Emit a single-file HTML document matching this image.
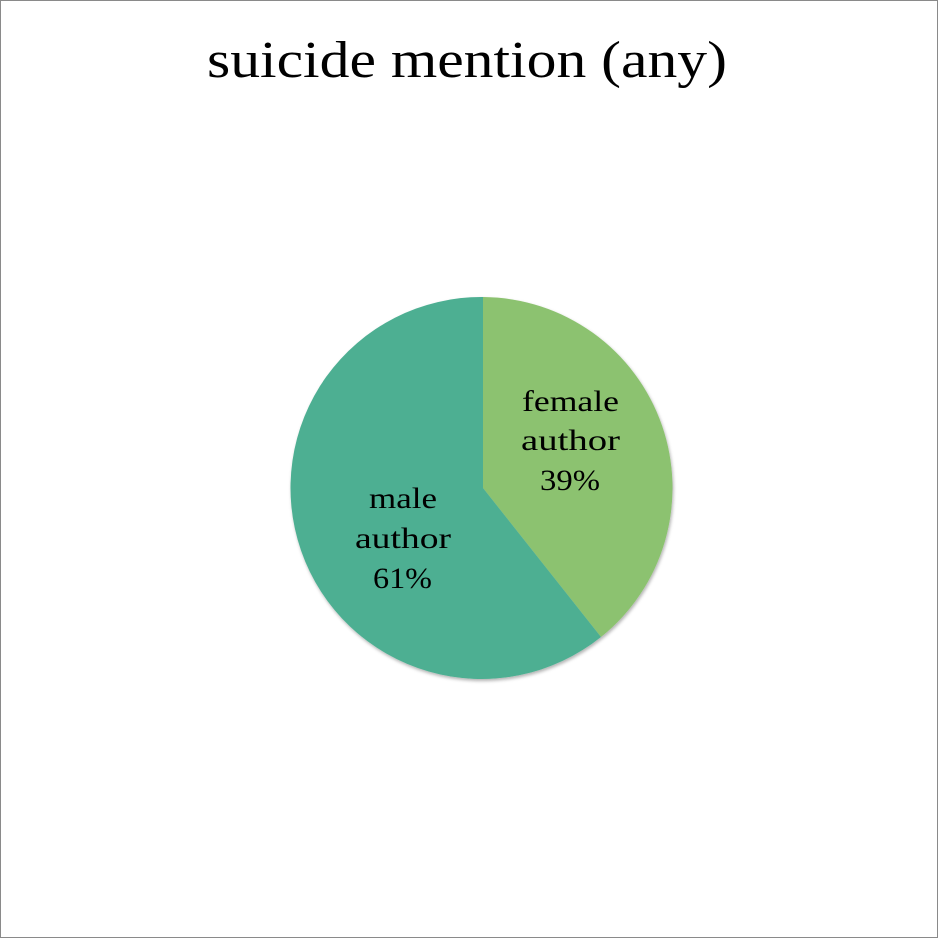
<!DOCTYPE html>
<html><head><style>
html,body{margin:0;padding:0;background:#fff;}
.f{position:absolute;left:0;top:0;width:936px;height:936px;border:1px solid #8a8a8a;}
svg{position:absolute;left:0;top:0}
</style></head><body>
<div class="f"></div>
<svg width="938" height="938" viewBox="0 0 938 938">
<defs><filter id="s" x="-10%" y="-10%" width="120%" height="120%"><feDropShadow dx="1" dy="2" stdDeviation="1.5" flood-opacity="0.3"/></filter></defs>
<g filter="url(#s)">
<path d="M483 488 L483 297 A191 191 0 0 1 601 637 Z" fill="#8CC26F"/>
<path d="M483 488 L601 637 A191 191 0 1 1 483 297 Z" fill="#4DAF92"/>
</g>
<text x="207" y="77" textLength="520" lengthAdjust="spacingAndGlyphs" font-family="Liberation Serif, serif" font-size="52">suicide mention (any)</text>
<g font-family="Liberation Serif, serif" font-size="30" fill="#000" lengthAdjust="spacingAndGlyphs">
<text x="522" y="411" textLength="97" lengthAdjust="spacingAndGlyphs">female</text>
<text x="521" y="450" textLength="99" lengthAdjust="spacingAndGlyphs">author</text>
<text x="540" y="490" textLength="60" lengthAdjust="spacingAndGlyphs">39%</text>
<text x="369" y="508" textLength="68" lengthAdjust="spacingAndGlyphs">male</text>
<text x="355" y="548" textLength="96" lengthAdjust="spacingAndGlyphs">author</text>
<text x="373" y="588" textLength="59" lengthAdjust="spacingAndGlyphs">61%</text>
</g>
</svg>
</body></html>
